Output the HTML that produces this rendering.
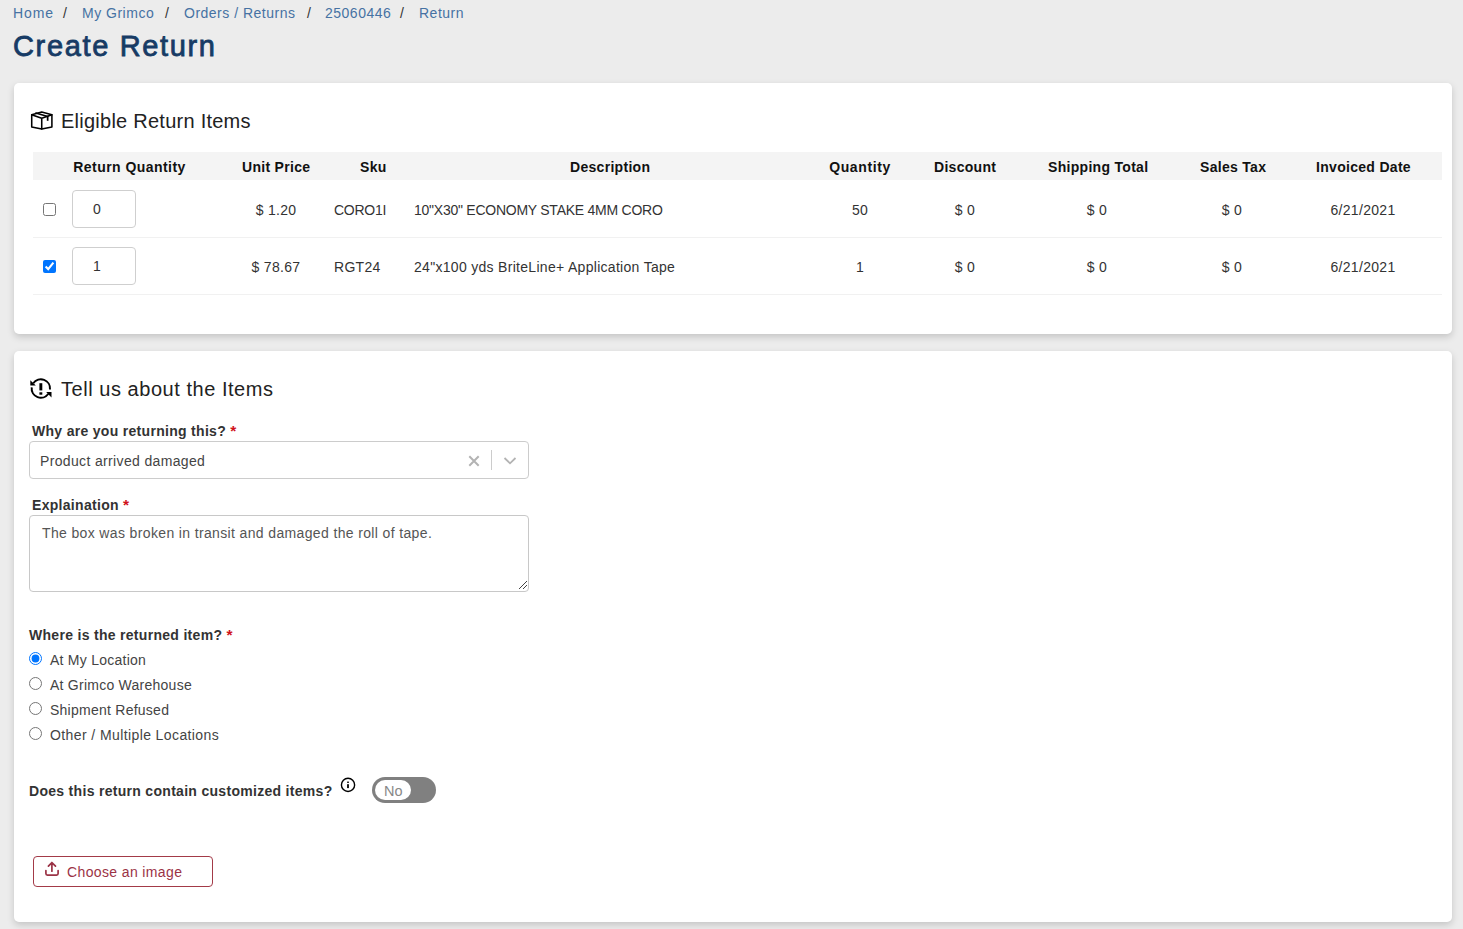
<!DOCTYPE html>
<html><head><meta charset="utf-8">
<style>
*{box-sizing:border-box;}
html,body{margin:0;padding:0;}
body{width:1463px;height:929px;overflow:hidden;background:#ececec;font-family:"Liberation Sans",sans-serif;color:#333;position:relative;}
.a{position:absolute;white-space:nowrap;}
.bc{top:4px;font-size:14px;line-height:18px;color:#4672a3;letter-spacing:0.5px;}
.bc.sep{color:#333;}
h1{position:absolute;margin:0;top:28px;left:13px;font-size:29px;line-height:36px;font-weight:400;-webkit-text-stroke:0.8px #173b65;color:#173b65;letter-spacing:1.65px;}
.card{position:absolute;left:14px;width:1438px;background:#fff;border-radius:5px;box-shadow:0 3px 7px rgba(0,0,0,0.17);}
.c1{top:83px;height:251px;}
.c2{top:351px;height:571px;}
.ttl{font-size:20px;line-height:24px;color:#222;letter-spacing:0.25px;}
.ttl2{letter-spacing:0.54px;}
.thead{position:absolute;left:19px;top:69px;width:1409px;height:28px;background:#f4f4f4;}
.th{position:absolute;top:1px;white-space:nowrap;font-size:14px;line-height:28px;font-weight:700;color:#111;letter-spacing:0.3px;text-align:center;}
.td{position:absolute;font-size:14px;line-height:20px;color:#333;letter-spacing:0.3px;}
.tdc{text-align:center;}
.divl{position:absolute;left:19px;width:1409px;height:1px;background:#f1f1f1;}
.qty{position:absolute;left:58px;width:64px;height:38px;border:1px solid #cfcfcf;border-radius:4px;font-size:14px;line-height:36px;padding-left:20px;color:#333;}
.cb{position:absolute;left:29px;margin:0;width:13px;height:13px;}
.lbl{font-size:14px;line-height:20px;font-weight:700;color:#333;letter-spacing:0.3px;}
.req{color:#d0121b;font-size:15.5px;position:relative;top:-0.5px;}
.sel{position:absolute;left:15px;top:90px;width:500px;height:38px;border:1px solid #cccccc;border-radius:4px;}
.ta{position:absolute;left:15px;top:164px;width:500px;height:77px;border:1px solid #c8c8c8;border-radius:4px;}
.rad{position:absolute;left:15px;margin:0;width:13px;height:13px;}
.rl{font-size:14px;line-height:20px;color:#444;letter-spacing:0.25px;}
</style></head>
<body>
<div class="a bc" style="left:13px;letter-spacing:0.9px">Home</div>
<div class="a bc sep" style="left:63px">/</div>
<div class="a bc" style="left:82px">My Grimco</div>
<div class="a bc sep" style="left:165px">/</div>
<div class="a bc" style="left:184px">Orders / Returns</div>
<div class="a bc sep" style="left:307px">/</div>
<div class="a bc" style="left:325px">25060446</div>
<div class="a bc sep" style="left:400px">/</div>
<div class="a bc" style="left:419px">Return</div>
<h1>Create Return</h1>

<div class="card c1">
  <svg class="a" style="left:12px;top:23px" width="32" height="28" viewBox="0 0 32 28" fill="none" stroke="#000" stroke-width="1.55" stroke-linejoin="round" stroke-linecap="round">
    <path d="M15.73 6.0 L25.9 8.7 L25.9 20.9 L15.73 23.05 L5.72 20.9 L5.72 8.7 Z"/>
    <path d="M5.72 8.7 L15.73 12.35 L25.9 8.7 M15.73 12.35 L15.73 23.05"/>
    <path d="M9.9 6.95 L21.6 10.5"/>
    <rect x="20.8" y="10.2" width="1.7" height="4.6" fill="#000" stroke="none"/>
  </svg>
  <div class="a ttl" style="left:47px;top:26px">Eligible Return Items</div>
  <div class="thead">
    <div class="th" style="left:40px;width:113px;letter-spacing:0.45px">Return Quantity</div>
    <div class="th" style="left:209px;width:68px">Unit Price</div>
    <div class="th" style="left:327px;width:25px">Sku</div>
    <div class="th" style="left:537px;width:80px">Description</div>
    <div class="th" style="left:796px;width:62px;letter-spacing:0.6px">Quantity</div>
    <div class="th" style="left:901px;width:61px">Discount</div>
    <div class="th" style="left:1015px;width:99px">Shipping Total</div>
    <div class="th" style="left:1167px;width:64px">Sales Tax</div>
    <div class="th" style="left:1283px;width:95px">Invoiced Date</div>
  </div>
  <!-- row 1 -->
  <input type="checkbox" class="cb" style="top:120px">
  <div class="qty" style="top:107px">0</div>
  <div class="td tdc" style="left:212px;width:100px;top:117px">$ 1.20</div>
  <div class="td" style="left:320px;top:117px;letter-spacing:-0.25px">CORO1I</div>
  <div class="td" style="left:400px;top:117px;letter-spacing:-0.25px">10"X30" ECONOMY STAKE 4MM CORO</div>
  <div class="td tdc" style="left:796px;width:100px;top:117px">50</div>
  <div class="td tdc" style="left:901px;width:100px;top:117px">$ 0</div>
  <div class="td tdc" style="left:1033px;width:100px;top:117px">$ 0</div>
  <div class="td tdc" style="left:1168px;width:100px;top:117px">$ 0</div>
  <div class="td tdc" style="left:1299px;width:100px;top:117px">6/21/2021</div>
  <div class="divl" style="top:154px"></div>
  <!-- row 2 -->
  <input type="checkbox" class="cb" style="top:177px" checked>
  <div class="qty" style="top:164px">1</div>
  <div class="td tdc" style="left:212px;width:100px;top:174px">$ 78.67</div>
  <div class="td" style="left:320px;top:174px">RGT24</div>
  <div class="td" style="left:400px;top:174px">24"x100 yds BriteLine+ Application Tape</div>
  <div class="td tdc" style="left:796px;width:100px;top:174px">1</div>
  <div class="td tdc" style="left:901px;width:100px;top:174px">$ 0</div>
  <div class="td tdc" style="left:1033px;width:100px;top:174px">$ 0</div>
  <div class="td tdc" style="left:1168px;width:100px;top:174px">$ 0</div>
  <div class="td tdc" style="left:1299px;width:100px;top:174px">6/21/2021</div>
  <div class="divl" style="top:211px"></div>
</div>

<div class="card c2">
  <svg class="a" style="left:12px;top:23px" width="30" height="30" viewBox="0 0 30 30">
    <path d="M24.0 15.5 A9.2 9.2 0 0 0 7.31 9.22" fill="none" stroke="#000" stroke-width="2"/>
    <path d="M5.72 13.4 A9.2 9.2 0 0 0 22.39 19.78" fill="none" stroke="#000" stroke-width="2"/>
    <path d="M4.3 6.2 L4.3 11.6 L9.8 11.6 Z" fill="#000"/>
    <path d="M20.2 18.1 L25.5 18.1 L25.5 23.5 Z" fill="#000"/>
    <rect x="13.4" y="9.2" width="2.9" height="7.2" fill="#000"/>
    <rect x="13.4" y="18.3" width="2.9" height="2.4" fill="#000"/>
  </svg>
  <div class="a ttl ttl2" style="left:47px;top:26px">Tell us about the Items</div>
  <div class="a lbl" style="left:18px;top:70px">Why are you returning this? <span class="req">*</span></div>
  <div class="sel">
    <div class="a" style="left:10px;top:9px;font-size:14px;line-height:20px;color:#444;letter-spacing:0.35px">Product arrived damaged</div>
    <svg class="a" style="left:438px;top:13px" width="12" height="12" viewBox="0 0 12 12"><path d="M1.3 1.3 L10.7 10.7 M10.7 1.3 L1.3 10.7" stroke="#b3b3b3" stroke-width="2"/></svg>
    <div class="a" style="left:461px;top:8px;width:1px;height:20px;background:#cccccc"></div>
    <svg class="a" style="left:473px;top:14px" width="14" height="10" viewBox="0 0 14 10"><path d="M1.5 2 L7 7.3 L12.5 2" fill="none" stroke="#b3b3b3" stroke-width="1.8"/></svg>
  </div>
  <div class="a lbl" style="left:18px;top:144px">Explaination <span class="req">*</span></div>
  <div class="ta">
    <div class="a" style="left:12px;top:7px;font-size:14px;line-height:20px;color:#555;letter-spacing:0.36px">The box was broken in transit and damaged the roll of tape.</div>
    <svg class="a" style="left:487px;top:63px" width="11" height="11" viewBox="0 0 11 11"><path d="M10 2 L2 10 M10 6 L6 10" stroke="#444" stroke-width="1"/></svg>
  </div>
  <div class="a lbl" style="left:15px;top:274px">Where is the returned item? <span class="req">*</span></div>
  <input type="radio" name="r" class="rad" style="top:301px" checked>
  <div class="a rl" style="left:36px;top:299px">At My Location</div>
  <input type="radio" name="r" class="rad" style="top:326px">
  <div class="a rl" style="left:36px;top:324px">At Grimco Warehouse</div>
  <input type="radio" name="r" class="rad" style="top:351px">
  <div class="a rl" style="left:36px;top:349px">Shipment Refused</div>
  <input type="radio" name="r" class="rad" style="top:376px">
  <div class="a rl" style="left:36px;top:374px;letter-spacing:0.4px">Other / Multiple Locations</div>
  <div class="a lbl" style="left:15px;top:430px">Does this return contain customized items?</div>
  <svg class="a" style="left:322px;top:421px" width="26" height="26" viewBox="0 0 26 26">
    <circle cx="12.03" cy="12.9" r="6.6" fill="none" stroke="#000" stroke-width="1.4"/>
    <rect x="11.1" y="9.6" width="1.8" height="1.3" fill="#000"/>
    <rect x="11.1" y="12.2" width="1.8" height="3.9" fill="#000"/>
  </svg>
  <div class="a" style="left:358px;top:426px;width:64px;height:26px;border-radius:13px;background:#808080"></div>
  <div class="a" style="left:361px;top:429px;width:36px;height:20px;border-radius:10px;background:#fff"></div>
  <div class="a" style="left:370px;top:429.5px;font-size:14.5px;line-height:20px;color:#888;letter-spacing:0.1px">No</div>
  <div class="a" style="left:19px;top:505px;width:180px;height:31px;border:1px solid #a33a48;border-radius:4px"></div>
  <svg class="a" style="left:26px;top:507px" width="24" height="22" viewBox="0 0 24 22" fill="none" stroke="#9b3346" stroke-width="1.7" stroke-linecap="round" stroke-linejoin="round">
    <path d="M11.9 4.6 L11.9 13.2 M8.4 8.2 L11.9 4.6 L15.5 8.2"/>
    <path d="M5.9 12.6 L5.9 15.6 Q5.9 17.1 7.4 17.1 L16.6 17.1 Q18.1 17.1 18.1 15.6 L18.1 12.6"/>
  </svg>
  <div class="a" style="left:53px;top:511px;font-size:14px;line-height:20px;color:#9b3346;letter-spacing:0.37px">Choose an image</div>
</div>
</body></html>
